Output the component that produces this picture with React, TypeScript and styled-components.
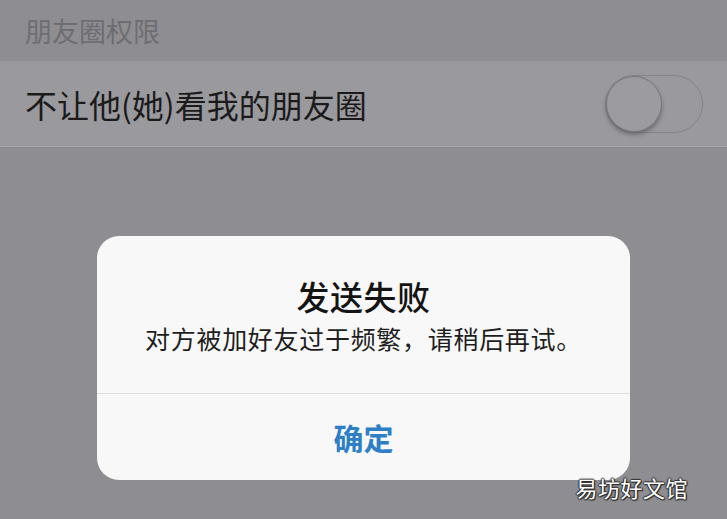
import React from 'react';
import styled, { createGlobalStyle } from 'styled-components';

const GlobalStyle = createGlobalStyle`
  html, body {
    margin: 0;
    padding: 0;
    background: #8e8d92;
  }
  body {
    font-family: "Noto Sans CJK SC", "Noto Sans", sans-serif;
  }
`;

const Screen = styled.div`
  position: relative;
  width: 727px;
  height: 519px;
  overflow: hidden;
  background: #8e8d92;
  display: flex;
  flex-direction: column;
`;

const SectionHeader = styled.div`
  height: 61px;
  padding-left: 25px;
  display: flex;
  align-items: center;
  font-size: 27px;
  color: #6e6d72;
  border-bottom: 1px solid #98979b;
`;

const Row = styled.div`
  height: 84px;
  padding: 0 24px 0 25px;
  display: flex;
  align-items: center;
  justify-content: space-between;
  background: #9a999d;
  border-bottom: 1px solid #a5a4a8;
`;

const RowLabel = styled.span`
  font-size: 32px;
  color: #1b1b1c;
  line-height: 1;
`;

const Toggle = styled.div<{ $on?: boolean }>`
  position: relative;
  width: 96px;
  height: 56px;
  border-radius: 29px;
  border: 1px solid #858488;
  background: ${({ $on }) => ($on ? '#3d8b45' : '#9a999d')};
`;

const Knob = styled.div`
  position: absolute;
  top: 0;
  left: 0;
  width: 54px;
  height: 54px;
  border-radius: 50%;
  background: #9c9ba0;
  border: 1px solid #78777b;
  box-shadow: 0 3px 4px rgba(60, 60, 64, 0.45);
`;

const Overlay = styled.div`
  flex: 1;
  display: flex;
  justify-content: center;
  padding-top: 89px;
`;

const Dialog = styled.div`
  width: 533px;
  height: 244px;
  border-radius: 22px;
  background: #f8f8f8;
  display: flex;
  flex-direction: column;
  overflow: hidden;
`;

const Body = styled.div`
  padding: 40px 20px 39px;
  display: flex;
  flex-direction: column;
  align-items: center;
  gap: 6px;
  border-bottom: 1px solid #dddddd;
`;

const Title = styled.div`
  font-size: 33px;
  font-weight: 500;
  line-height: 40px;
  letter-spacing: 0.5px;
  color: #141414;
`;

const Message = styled.div`
  font-size: 25px;
  line-height: 32px;
  letter-spacing: 0.7px;
  color: #1e1e1e;
`;

const ActionButton = styled.button`
  flex: 1;
  border: none;
  background: transparent;
  font-family: "Noto Sans CJK SC", sans-serif;
  font-size: 30px;
  font-weight: 600;
  color: #2f7fc6;
  padding: 0;
  cursor: pointer;
`;

const Watermark = styled.div`
  position: absolute;
  right: 39px;
  bottom: 21px;
  font-size: 22px;
  line-height: 1;
  letter-spacing: 0.5px;
  color: #ffffff;
  text-shadow:
    1px 0 1px #303030, -1px 0 1px #303030, 0 1px 1px #303030, 0 -1px 1px #303030,
    1px 1px 1px #2a2a2a;
`;

export default function App() {
  return (
    <>
      <GlobalStyle />
      <Screen>
        <SectionHeader>朋友圈权限</SectionHeader>
        <Row>
          <RowLabel>不让他(她)看我的朋友圈</RowLabel>
          <Toggle>
            <Knob />
          </Toggle>
        </Row>
        <Overlay>
          <Dialog>
            <Body>
              <Title>发送失败</Title>
              <Message>对方被加好友过于频繁，请稍后再试。</Message>
            </Body>
            <ActionButton>确定</ActionButton>
          </Dialog>
        </Overlay>
        <Watermark>易坊好文馆</Watermark>
      </Screen>
    </>
  );
}
